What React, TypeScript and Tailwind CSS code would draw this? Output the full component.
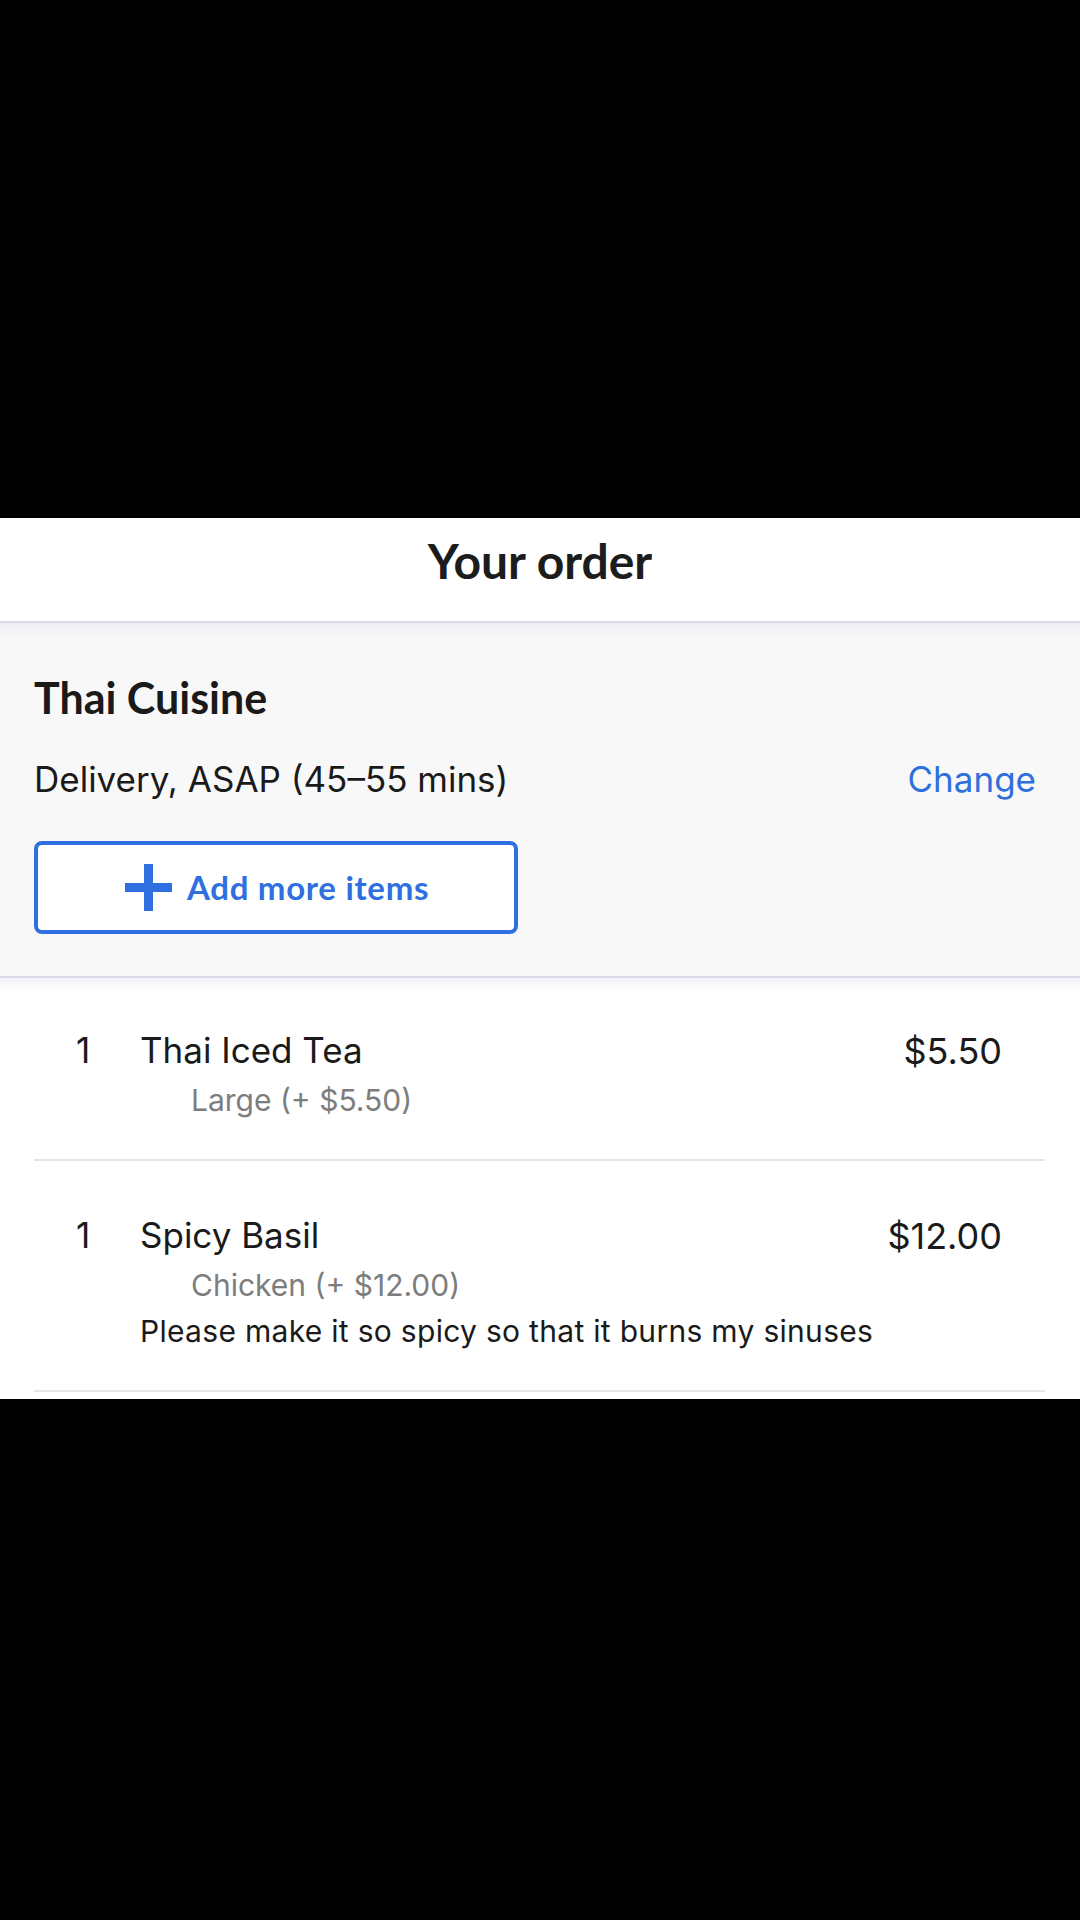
import { FC } from "react";

type Item = {
    qty: number;
    name: string;
    option: string;
    price: string;
    note?: string;
};

const items: Item[] = [
    { qty: 1, name: "Thai Iced Tea", option: "Large (+ $5.50)", price: "$5.50" },
    {
        qty: 1,
        name: "Spicy Basil",
        option: "Chicken (+ $12.00)",
        price: "$12.00",
        note: "Please make it so spicy so that it burns my sinuses",
    },
];

const OrderItem: FC<{ item: Item }> = ({ item }) => {
    return (
        <div className="border-b-2 border-[#e6e6e8] pb-[44px]">
            <div className="flex pl-[42px] pr-[43px] text-[35px] leading-none text-[#1a1a1a]">
                <span className="w-[64px]">{item.qty}</span>
                <span className="flex-1">{item.name}</span>
                <span className="text-[36px]">{item.price}</span>
            </div>
            <div className="pl-[157px] mt-[16px] text-[30px] leading-none text-[#7d7d7d]">
                {item.option}
            </div>
            {item.note && (
                <div className="pl-[106px] mt-[16px] text-[30px] leading-none tracking-[0.3px] text-[#1a1a1a]">
                    {item.note}
                </div>
            )}
        </div>
    );
};

export default function App() {
    return (
        <div className="min-h-[1920px] bg-black flex flex-col font-['Inter',sans-serif]">
            <div className="h-[518px]" />

            <div className="h-[103px] bg-white pt-[19px] text-center font-['Lato',sans-serif] text-[48px] font-bold leading-none text-[#1c1c1c]">
                Your order
            </div>

            <div className="h-[2px] bg-[#dcdaea]" />
            <div className="bg-[#f8f8f8] px-[34px] pt-[53px] pb-[42px] relative">
                <div className="absolute left-0 right-0 top-0 h-[14px] bg-gradient-to-b from-[#efeef6] to-transparent" />
                <h2 className="relative font-['Lato',sans-serif] text-[43px] font-bold leading-none text-[#1a1a1a]">Thai Cuisine</h2>
                <div className="relative mt-[43px] flex items-center justify-between text-[35px] leading-none">
                    <span className="text-[#1a1a1a]">Delivery, ASAP (45–55 mins)</span>
                    <button className="text-[#2f6fdc] pr-[10px]">Change</button>
                </div>
                <button className="relative mt-[44px] flex h-[93px] w-[484px] items-center rounded-[8px] border-[4px] border-[#2f6fe0] bg-white pl-[87px]">
                    <svg width="47" height="47" viewBox="0 0 47 47" className="shrink-0">
                        <rect x="19" y="0" width="9" height="47" fill="#2f6fe0" />
                        <rect x="0" y="19" width="47" height="9" fill="#2f6fe0" />
                    </svg>
                    <span className="ml-[15px] font-['Lato',sans-serif] text-[33px] font-bold leading-none tracking-[0.7px] text-[#2f6fe0]">Add more items</span>
                </button>
            </div>
            <div className="h-[2px] bg-[#dcdaea]" />

            <div className="bg-white relative">
                <div className="absolute left-0 right-0 top-0 h-[14px] bg-gradient-to-b from-[#f3f2f9] to-transparent" />
                <div className="relative pl-[34px] pr-[35px]">
                    {items.map((item, i) => (
                        <div key={i} className={i === 0 ? "pt-[55px]" : "pt-[57px]"}>
                            <OrderItem item={item} />
                        </div>
                    ))}
                    <div className="h-[7px]" />
                </div>
            </div>

            <div className="flex-1 bg-black" />
        </div>
    );
}
